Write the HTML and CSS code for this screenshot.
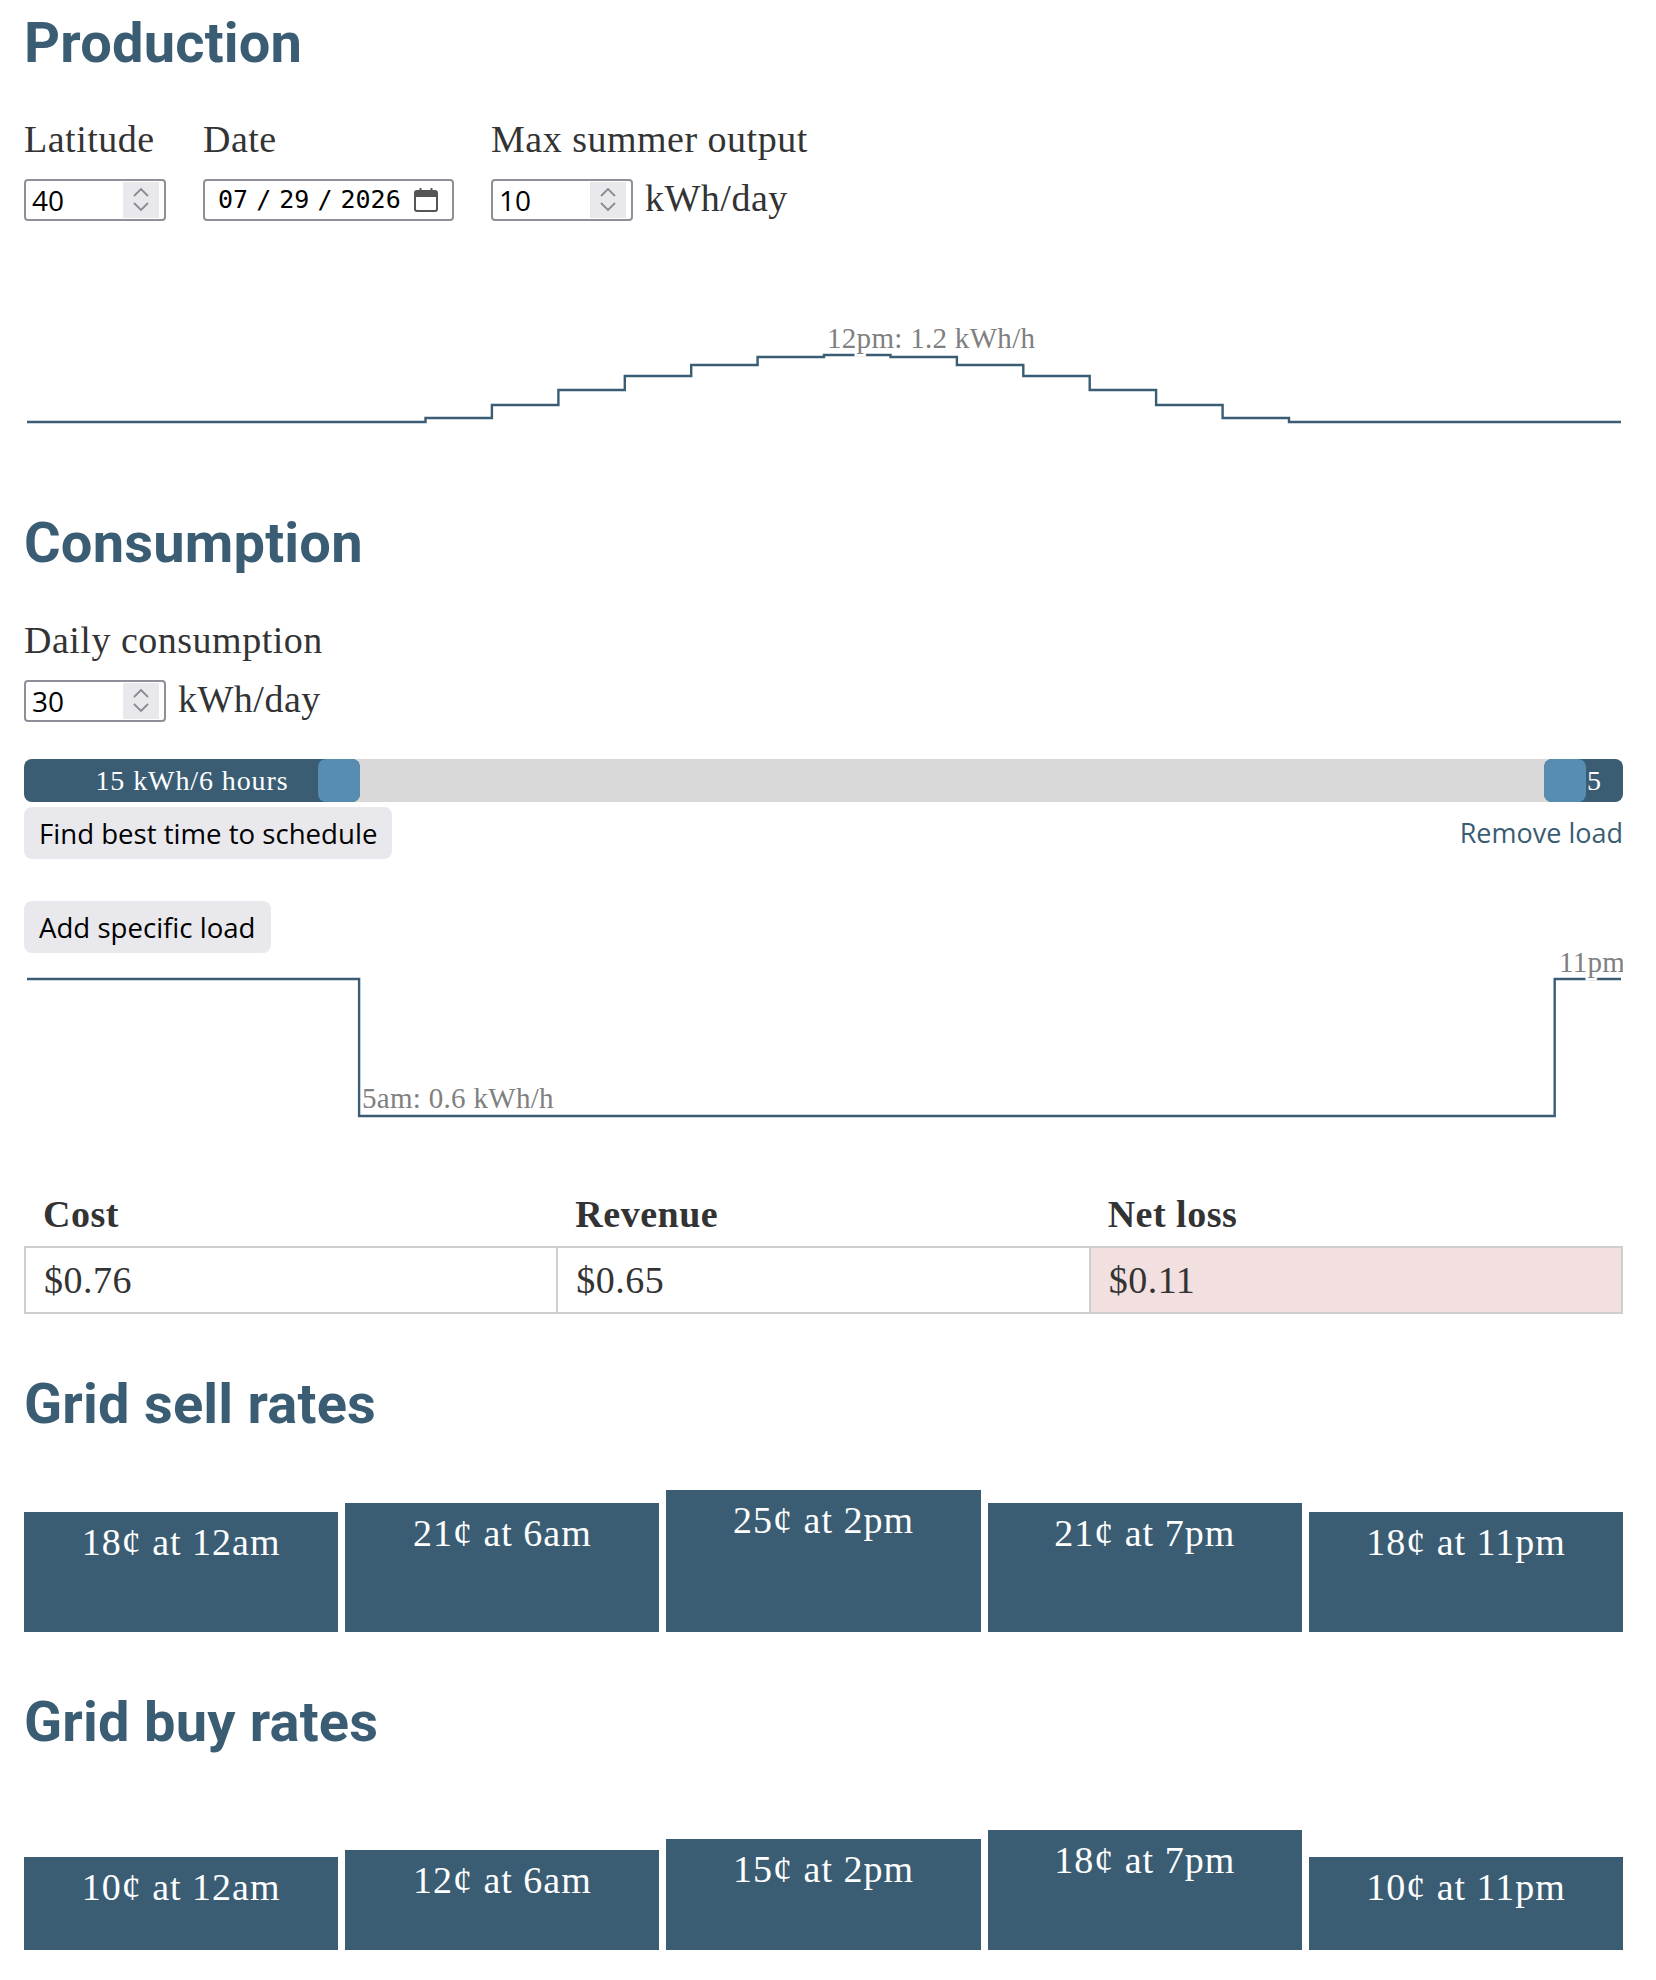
FILE: index.html
```html
<!DOCTYPE html>
<html lang="en">
<head>
    <meta charset="UTF-8">
    <meta name="viewport" content="width=device-width, initial-scale=1.0">
    <title>Solar planner</title>
    <link rel="stylesheet" href="styles.css">
</head>
<body>
    <h2 class="title first">Production</h2>
    <div class="fields">
        <div class="field">
            <label>Latitude</label>
            <div class="num-input">
                <span>40</span>
                <span class="spinner"><svg viewBox="0 0 36 36" width="36" height="36"><path d="M11 14 L18 7 L25 14 M11 21 L18 28 L25 21"/></svg></span>
            </div>
        </div>
        <div class="field">
            <label>Date</label>
            <div class="date-input">
                <span class="date-text">07 / 29 / 2026</span>
                <svg class="cal" viewBox="0 0 26 26" width="26" height="26"><rect x="2" y="4" width="22" height="20" rx="2"/><path class="fill" d="M2 6 Q2 4 4 4 H22 Q24 4 24 6 V10 H2 Z"/><path d="M7.5 1 V5 M18.5 1 V5"/></svg>
            </div>
        </div>
        <div class="field">
            <label>Max summer output</label>
            <div class="with-unit">
                <div class="num-input">
                    <span>10</span>
                    <span class="spinner"><svg viewBox="0 0 36 36" width="36" height="36"><path d="M11 14 L18 7 L25 14 M11 21 L18 28 L25 21"/></svg></span>
                </div>
                <span class="unit">kWh/day</span>
            </div>
        </div>
    </div>

    <svg class="chart production" viewBox="0 0 1599 210">
        <path d="M3 192 H401.5 V188 H467.9 V175 H534.4 V160 H600.8 V146 H667.2 V135 H733.6 V127 H800 V125 H866.5 V127 H932.9 V135 H999.3 V146 H1065.7 V160 H1132.1 V175 H1198.6 V188 H1265 V192 H1597"/>
        <text x="803" y="118">12pm: 1.2 kWh/h</text>
    </svg>

    <h2 class="title consumption">Consumption</h2>
    <div class="field daily">
        <label>Daily consumption</label>
        <div class="with-unit">
            <div class="num-input">
                <span>30</span>
                <span class="spinner"><svg viewBox="0 0 36 36" width="36" height="36"><path d="M11 14 L18 7 L25 14 M11 21 L18 28 L25 21"/></svg></span>
            </div>
            <span class="unit">kWh/day</span>
        </div>
    </div>

    <div class="load-track">
        <div class="load-seg" style="left:0;width:21.01%">
            <span>15 kWh/6 hours</span>
            <span class="handle end"></span>
        </div>
        <div class="load-seg wrap" style="left:95.06%;width:4.94%">
            <span class="handle start"></span>
            <span>5</span>
        </div>
    </div>
    <div class="load-actions">
        <button class="btn">Find best time to schedule</button>
        <button class="link-btn">Remove load</button>
    </div>
    <button class="btn add">Add specific load</button>

    <svg class="chart usage" viewBox="0 0 1599 200">
        <path d="M3 26 H335.1 V163 H1530.7 V26 H1597"/>
        <text x="338" y="155">5am: 0.6 kWh/h</text>
        <text x="1535" y="19">11pm</text>
    </svg>

    <table class="totals">
        <thead>
            <tr><th>Cost</th><th>Revenue</th><th>Net loss</th></tr>
        </thead>
        <tbody>
            <tr><td>$0.76</td><td>$0.65</td><td class="loss">$0.11</td></tr>
        </tbody>
    </table>

    <h2 class="title rates-title">Grid sell rates</h2>
    <div class="rates">
        <div class="rate" style="height:120px">18¢ at 12am</div>
        <div class="rate" style="height:129px">21¢ at 6am</div>
        <div class="rate" style="height:142px">25¢ at 2pm</div>
        <div class="rate" style="height:129px">21¢ at 7pm</div>
        <div class="rate" style="height:120px">18¢ at 11pm</div>
    </div>

    <h2 class="title rates-title">Grid buy rates</h2>
    <div class="rates">
        <div class="rate" style="height:93px">10¢ at 12am</div>
        <div class="rate" style="height:100px">12¢ at 6am</div>
        <div class="rate" style="height:111px">15¢ at 2pm</div>
        <div class="rate" style="height:120px">18¢ at 7pm</div>
        <div class="rate" style="height:93px">10¢ at 11pm</div>
    </div>
</body>
</html>
```

FILE: styles.css
```css
body{
    margin: 0 33px 29px 24px;
    font-family: "Liberation Serif", serif;
    font-size: 38px;
    line-height: 46px;
    letter-spacing: 0.5px;
    color: #333;
    background: #fff;
}
.title{
    font-family: Roboto, sans-serif;
    font-weight: 700;
    font-size: 56px;
    line-height: 68px;
    letter-spacing: 0.2px;
    color: #3a5d74;
    margin: 0;
}
.title.first{
    margin-top: 9px;
}
.title.consumption{
    margin-top: 69px;
}
.fields{
    display: flex;
    gap: 37px;
    margin-top: 39px;
}
.field{
    display: flex;
    flex-direction: column;
    gap: 17px;
}
.field.daily{
    margin-top: 40px;
}
.with-unit{
    display: flex;
    align-items: center;
    gap: 12px;
    height: 42px;
}
.unit{
    line-height: 42px;
    position: relative;
    top: -2px;
}
.num-input{
    box-sizing: border-box;
    width: 142px;
    height: 42px;
    border: 2px solid #8f8e99;
    border-radius: 4px;
    padding: 0 5px 0 6px;
    display: flex;
    align-items: center;
    justify-content: space-between;
    font-family: "Open Sans", sans-serif;
    font-size: 28px;
    line-height: 36px;
    letter-spacing: 0;
    color: #000;
}
.spinner{
    width: 36px;
    height: 36px;
    background: #e9e9ed;
    display: block;
}
.spinner svg{
    display: block;
    fill: none;
    stroke: #8a8a90;
    stroke-width: 1.8;
}
.date-input{
    box-sizing: border-box;
    width: 251px;
    height: 42px;
    border: 2px solid #8f8e99;
    border-radius: 4px;
    padding: 0 13px 0 13px;
    display: flex;
    align-items: center;
    justify-content: space-between;
    color: #000;
}
.date-text{
    font-family: "DejaVu Sans Mono", monospace;
    font-size: 25px;
    letter-spacing: 0;
    word-spacing: -7px;
    line-height: 36px;
}
.cal{
    fill: none;
    stroke: #555;
    stroke-width: 2;
}
.cal .fill{
    fill: #555;
    stroke: none;
}
.chart{
    display: block;
    width: 100%;
    overflow: visible;
}
.chart path{
    fill: none;
    stroke: #3a5d74;
    stroke-width: 2.4;
}
.chart text{
    font-family: "Liberation Serif", serif;
    font-size: 29px;
    letter-spacing: 0.3px;
    fill: #808080;
    stroke: #fff;
    stroke-width: 5px;
    paint-order: stroke;
}
.chart.production{
    height: 210px;
    margin-top: 9px;
}
.chart.usage{
    height: 200px;
}
.load-track{
    position: relative;
    height: 43px;
    margin-top: 37px;
    background: #d9d9d9;
    border-radius: 8px;
}
.load-seg{
    position: absolute;
    top: 0;
    bottom: 0;
    background: #3a5d74;
    border-radius: 8px;
    overflow: hidden;
    display: flex;
    align-items: center;
    justify-content: center;
    color: #fff;
    font-size: 28px;
    letter-spacing: 0.9px;
    line-height: 43px;
}
.load-seg.wrap{
    justify-content: flex-start;
    padding-left: 43px;
    box-sizing: border-box;
}
.handle{
    position: absolute;
    top: 0;
    bottom: 0;
    width: 42px;
    background: #568db0;
    border-radius: 8px;
}
.handle.end{
    right: 0;
}
.handle.start{
    left: 0;
}
.load-actions{
    display: flex;
    justify-content: space-between;
    align-items: center;
    margin-top: 5px;
}
.btn{
    font-family: "Open Sans", sans-serif;
    font-size: 27.6px;
    line-height: 36px;
    letter-spacing: 0;
    padding: 8px 15px;
    background: #e9e8ed;
    color: #000;
    border: none;
    border-radius: 8px;
}
.btn.add{
    display: block;
    margin-top: 42px;
}
.link-btn{
    font-family: "Open Sans", sans-serif;
    font-size: 27px;
    line-height: 36px;
    letter-spacing: 0;
    padding: 0;
    background: none;
    border: none;
    color: #3a5d74;
}
.totals{
    width: 100%;
    margin-top: 29px;
    border-collapse: collapse;
    table-layout: fixed;
}
.totals th{
    text-align: left;
    font-weight: bold;
    padding: 9px 18px;
}
.totals td{
    border: 2px solid #cfcfcf;
    padding: 9px 18px;
}
.totals td.loss{
    background: #f2dfdf;
}
.title.rates-title{
    margin-top: 56px;
}
.rates{
    display: flex;
    align-items: flex-end;
    gap: 7px;
    height: 165px;
    margin-top: 29px;
}
.rate{
    flex: 1;
    box-sizing: border-box;
    padding-top: 7px;
    background: #3a5d74;
    color: #fff;
    text-align: center;
    letter-spacing: 1px;
}
```
